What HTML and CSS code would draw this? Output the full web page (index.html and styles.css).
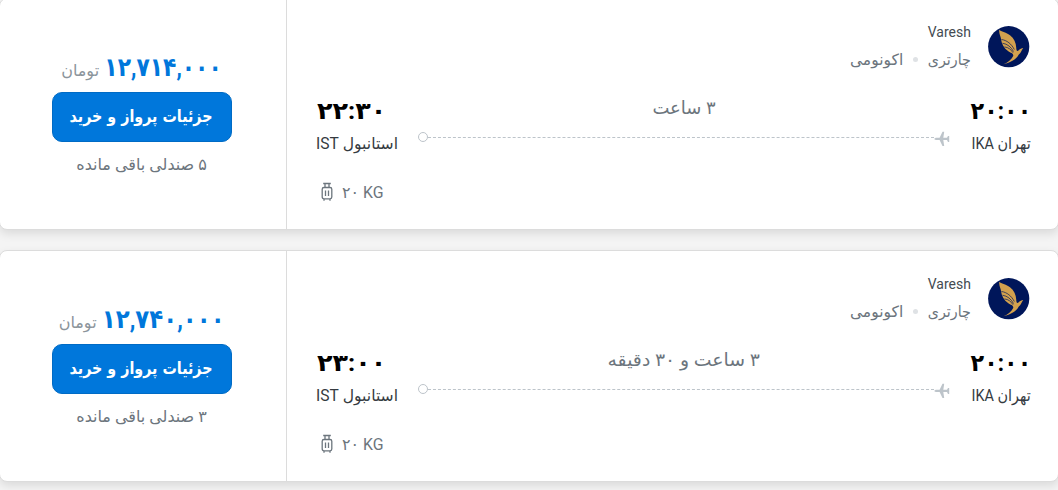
FILE: index.html
```
<!DOCTYPE html>
<html lang="fa" dir="rtl">
<head>
<meta charset="utf-8">
<title>Flights</title>
<link rel="stylesheet" href="styles.css">
</head>
<body>
<svg class="defs" width="0" height="0" aria-hidden="true">
  <symbol id="logo" viewBox="0 0 42 42">
    <circle cx="20.700" cy="20.700" r="20.600" fill="#00165a"/>
    <path d="M11.300 3.800C14.500 6.500 18 6 22 9.300C26 12.200 28 17 28.200 21.200C28.300 23.500 28.600 24.700 29.500 25C31 24.500 31.500 22.500 35.200 21.900C33.500 24 33 27 30.800 28.500C28.500 33 23.500 36.500 15.500 38.300C20 36.500 23.500 33.500 25.200 30C25.800 27.500 23 27 20 25C16 22.300 13.500 18 13 12.800C12.600 9.500 10.800 8 11.300 3.800Z" fill="#d3a14e"/>
    <path d="M13.500 13.500C19 14.300 23.500 18 26.300 23.500M14.500 17.200C19.500 18 23 21 25.500 25.500M16.500 20.900C20.500 21.400 23 23.500 25 26.700" fill="none" stroke="#00165a" stroke-width=".7"/>
  </symbol>
  <symbol id="plane" viewBox="0 0 16 16">
    <path d="M0 7.900L1.800 6.700H5.600L8.500.8H10.200L9.300 6.700H13L14 4.900H15.200V10.900H14L13 9.100H9.300L10.200 15H8.500L5.600 9.100H1.800Z" fill="#bdc4ca"/>
  </symbol>
  <symbol id="bag" viewBox="0 0 12 20">
    <path d="M2.200 1.500H9.800M4 1.500V5.500M8 1.500V5.500M3 5.500H9Q10.800 5.500 10.800 7.300V15Q10.800 16.800 9 16.800H3Q1.200 16.800 1.200 15V7.300Q1.200 5.500 3 5.500ZM4.500 8.500V14M7.500 8.500V14M3 17V18.800M9 17V18.800" fill="none" stroke="#6c757d" stroke-width="1.300"/>
  </symbol>
</svg>
<main class="results">
  <article class="card">
    <section class="flight">
      <header class="airline">
        <svg class="logo"><use href="#logo"/></svg>
        <div class="about">
          <div class="name"><span class="fit">Varesh</span></div>
          <div class="tags"><span class="fit charter">چارتری</span><i class="dot"></i><span class="fit economy">اکونومی</span></div>
        </div>
      </header>
      <div class="route">
        <div class="stop from"><b class="time"><span class="fit">۲۰:۰۰</span></b><div class="city"><span class="fit">تهران IKA</span></div></div>
        <div class="path"><div class="duration"><span class="fit">۳ ساعت</span></div><div class="line"><svg class="plane"><use href="#plane"/></svg><span class="dash"></span><span class="ring"></span></div></div>
        <div class="stop to"><b class="time"><span class="fit">۲۲:۳۰</span></b><div class="city"><span class="fit">استانبول IST</span></div></div>
      </div>
      <div class="baggage"><svg class="bag"><use href="#bag"/></svg><span class="fit">۲۰ KG</span></div>
    </section>
    <aside class="offer">
      <div class="price"><b class="fit amount">۱۲,۷۱۴,۰۰۰</b><span class="fit unit">تومان</span></div>
      <button class="buy"><span class="fit">جزئیات پرواز و خرید</span></button>
      <div class="seats"><span class="fit">۵ صندلی باقی مانده</span></div>
    </aside>
  </article>
  <article class="card">
    <section class="flight">
      <header class="airline">
        <svg class="logo"><use href="#logo"/></svg>
        <div class="about">
          <div class="name"><span class="fit">Varesh</span></div>
          <div class="tags"><span class="fit charter">چارتری</span><i class="dot"></i><span class="fit economy">اکونومی</span></div>
        </div>
      </header>
      <div class="route">
        <div class="stop from"><b class="time"><span class="fit">۲۰:۰۰</span></b><div class="city"><span class="fit">تهران IKA</span></div></div>
        <div class="path"><div class="duration long"><span class="fit">۳ ساعت و ۳۰ دقیقه</span></div><div class="line"><svg class="plane"><use href="#plane"/></svg><span class="dash"></span><span class="ring"></span></div></div>
        <div class="stop to"><b class="time"><span class="fit">۲۳:۰۰</span></b><div class="city"><span class="fit">استانبول IST</span></div></div>
      </div>
      <div class="baggage"><svg class="bag"><use href="#bag"/></svg><span class="fit">۲۰ KG</span></div>
    </section>
    <aside class="offer">
      <div class="price wide"><b class="fit amount">۱۲,۷۴۰,۰۰۰</b><span class="fit unit">تومان</span></div>
      <button class="buy"><span class="fit">جزئیات پرواز و خرید</span></button>
      <div class="seats"><span class="fit">۳ صندلی باقی مانده</span></div>
    </aside>
  </article>
</main>
</body>
</html>
```
FILE: styles.css
```
* { box-sizing: border-box; }
html, body { margin: 0; height: 490px; overflow: hidden; }
body { background: #f4f4f4; font-family: Roboto, "DejaVu Sans", sans-serif; color: #212529; }
.defs { display: none; }
.results { width: 1060px; margin: -2px -1px 0; }
.card { display: flex; height: 232px; margin-bottom: 20px; background: #fff; border: 1px solid #dcdcdc; border-radius: 8px; box-shadow: 0 4px 10px rgba(0,0,0,.1); }
.fit { display: inline-block; white-space: nowrap; flex: none; transform-origin: right center; }
.flight { width: 772px; padding: 27px 28px 0 29px; border-left: 1px solid #dcdcdc; }
.airline { display: flex; gap: 17px; height: 68px; }
.logo { width: 42px; height: 42px; flex: none; }
.about { margin-top: -8px; }
.name, .tags { display: flex; height: 27px; align-items: center; }
.name { font-size: 15.5px; color: #444b52; }
.name .fit { transform: scaleX(.9); }
.tags { height: 29px; font-size: 15.5px; color: #6c757d; }
.charter { transform: scaleX(.92); margin-left: -4px; }
.dot { width: 5px; height: 5px; margin: 0 10px; border-radius: 50%; background: #dfe2e5; }
.route { display: flex; height: 67px; }
.stop { width: 80px; }
.to { direction: ltr; width: 102px; }
.to .fit { direction: rtl; transform-origin: left center; }
.time, .city { display: flex; align-items: center; }
.time { height: 34px; font-size: 24px; color: #000; }
.from .time .fit { transform: translateX(1px) scaleX(.93); }
.to .time .fit { transform: translateX(1px) scaleX(1.06); }
.city { height: 31px; font-size: 16px; color: #343a40; }
.from .city .fit { transform: translateX(1px) scaleX(.9); }
.to .city .fit { transform: scaleX(.975); }
.path { flex: 1; }
.duration { display: flex; justify-content: center; align-items: center; height: 26px; margin-bottom: 4px; font-size: 18px; color: #6c757d; }
.duration .fit { transform-origin: center; }
.long .fit { transform: scaleX(1.048); }
.line { display: flex; height: 26px; align-items: center; }
.plane { width: 16px; height: 16px; margin-top: 3px; }
.dash { flex: 1; border-top: 1px dashed #bdc4ca; }
.ring { width: 10px; height: 10px; border: 1px solid #bdc4ca; border-radius: 50%; }
.baggage { display: flex; direction: ltr; align-items: center; gap: 9px; height: 34px; margin: 14px 0 0 5px; font-size: 16px; color: #6c757d; }
.bag { width: 12px; height: 20px; }
.baggage .fit { transform: scaleX(.99); transform-origin: left center; }
.offer { width: 286px; padding: 51px 1px 0 0; margin-right: 1px; margin-left: -1px; display: flex; flex-direction: column; align-items: center; }
.price { display: flex; align-items: center; justify-content: center; gap: 5px; height: 42px; padding-bottom: 2px; width: 200px; }
.amount { font-size: 26px; color: #0077db; transform: translateY(-3px) scaleX(.84); margin-left: -22px; }
.wide .amount { transform: translateY(-3px) scaleX(.88); margin-left: -17px; }
.unit { font-size: 16px; color: #8b949b; }
.buy { width: 180px; height: 50px; display: flex; justify-content: center; align-items: center; padding: 0 0 3px; border: 1px solid #006bc5; border-radius: 10px; background: #0077db; color: #fff; font: bold 17px "DejaVu Sans", sans-serif; }
.buy .fit { transform: scaleX(.84); transform-origin: center; }
.seats { height: 45px; display: flex; align-items: center; font-size: 16px; color: #6c757d; }
```
